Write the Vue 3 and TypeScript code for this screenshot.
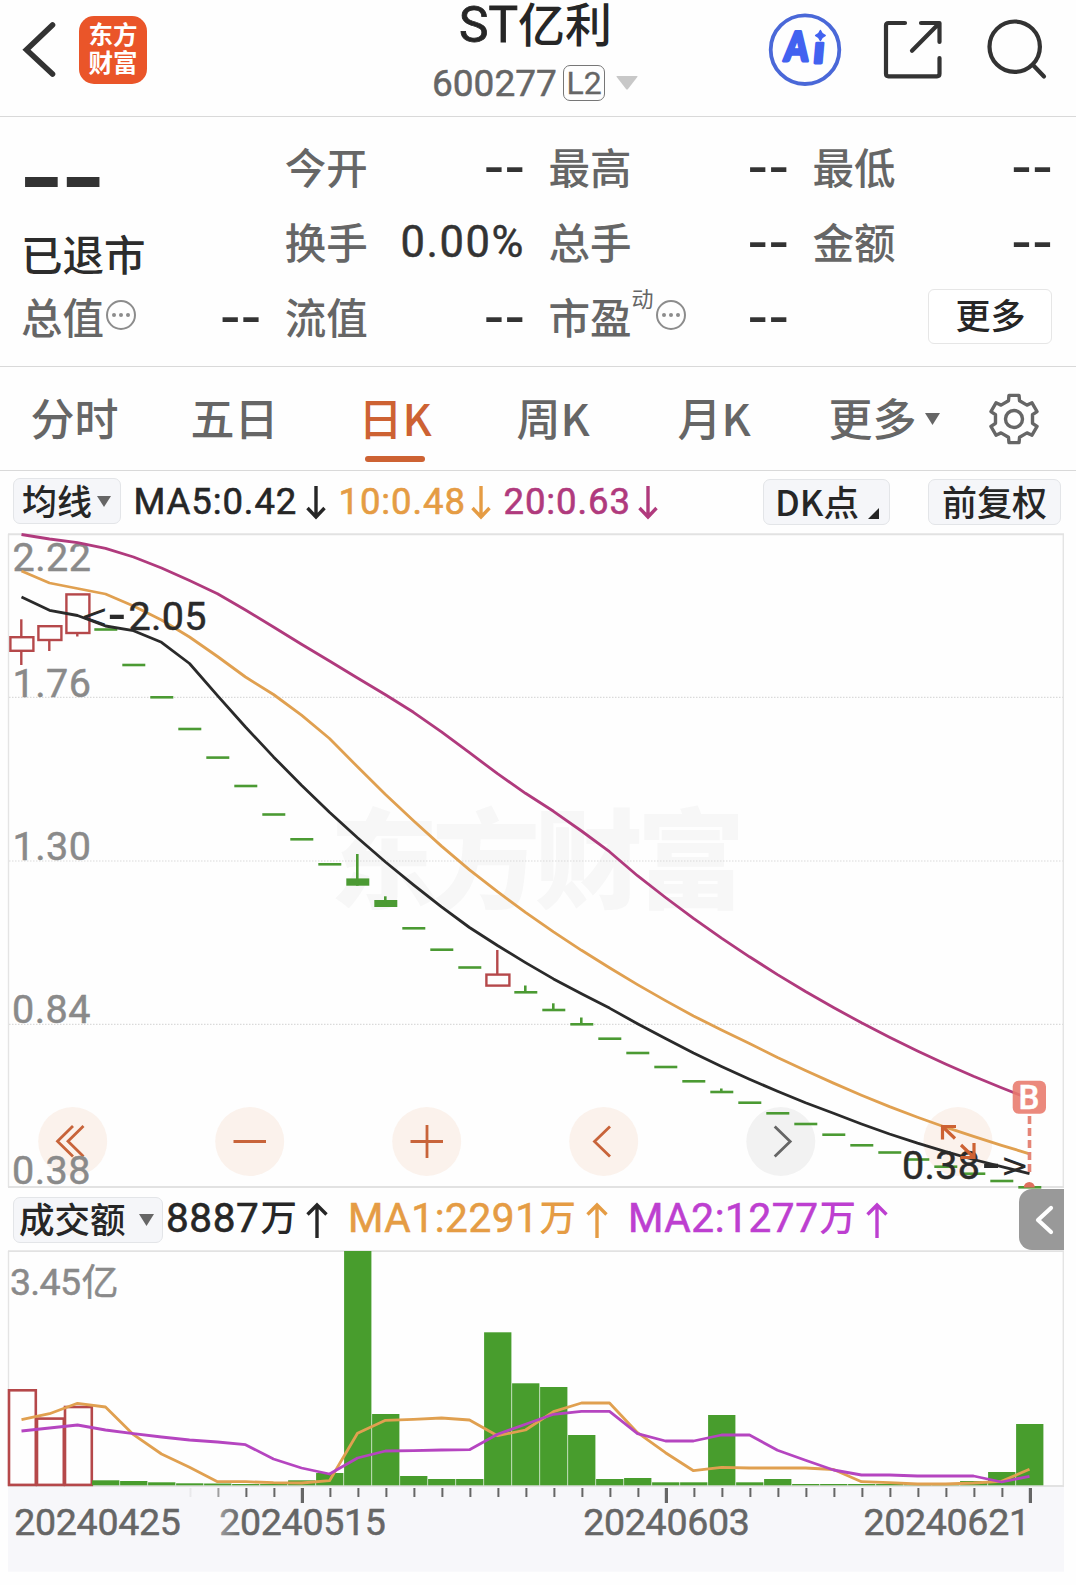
<script setup lang="ts">
interface Stat { label: string; value: string; info?: boolean; sup?: string }
interface Box { i: number; top: number; bottom: number; hi: number; lo: number }

const stats: Stat[][] = [
  [{ label: '今开', value: '--' }, { label: '最高', value: '--' }, { label: '最低', value: '--' }],
  [{ label: '换手', value: '0.00%' }, { label: '总手', value: '--' }, { label: '金额', value: '--' }],
]
const lastRow: Stat[] = [
  { label: '总值', value: '--', info: true },
  { label: '流值', value: '--' },
  { label: '市盈', value: '--', info: true, sup: '动' },
]
const tabs = ['分时', '五日', '日K', '周K', '月K']

const STEP = 28
const cx = (i: number): number => 21.5 + STEP * i

// vertical position of each day's close
const closes = [
  637.5, 626.5, 595, 629.5, 665, 697.3, 729, 757.6, 786, 814.5, 839.3, 864.3, 885, 907, 928.3, 949.7, 967.5, 975,
  992.3, 1010, 1024.3, 1038.7, 1053, 1067, 1081.3, 1092, 1102.7, 1113.3, 1124, 1134.7, 1145.3, 1152.5, 1159.5,
  1166.7, 1173.7, 1181, 1187.3,
]
const solid = [0, 1, 2, 12, 13, 17]
const dashes = closes.map((y, i) => ({ y, i })).filter((d) => !solid.includes(d.i))
const wicks = [
  { i: 18, y: 985.5 }, { i: 19, y: 1003.3 }, { i: 20, y: 1017.5 }, { i: 25, y: 1088.5 },
].map((w) => ({ ...w, y2: closes[w.i] }))
const rises: Box[] = [
  { i: 0, top: 637.2, bottom: 650.8, hi: 619.3, lo: 665 },
  { i: 1, top: 626.2, bottom: 640, hi: 626, lo: 651 },
  { i: 2, top: 594.4, bottom: 633, hi: 594, lo: 636.5 },
  { i: 17, top: 974.6, bottom: 985.6, hi: 950, lo: 985.6 },
]
const falls: Box[] = [
  { i: 12, top: 878.4, bottom: 885.7, hi: 854, lo: 885.7 },
  { i: 13, top: 900, bottom: 907, hi: 896.3, lo: 907 },
]

const average = (n: number, seed: number[]): number[] =>
  closes.map((_, i) => (i < seed.length ? seed[i] : closes.slice(i - n + 1, i + 1).reduce((a, b) => a + b, 0) / n))
const toPoints = (ys: number[]): string => ys.map((y, i) => `${cx(i)},${y.toFixed(1)}`).join(' ')

const ma5 = toPoints(average(5, [597, 610.3, 615.5, 626, 630.7, 642.3, 663.5]))
const ma10 = toPoints(average(10, [571, 583, 588.5, 594, 606, 620, 637, 656.5, 677, 694.5, 715.2, 738.5]))
const ma20 = toPoints(average(20, [
  534.5, 539, 542.7, 548.3, 557, 568, 580.5, 593.7, 610, 627, 644.3, 661, 678, 694.7, 712.3, 731.8, 752.7, 773.7,
  793.3, 811.3, 831, 851.7,
]))

const volumes = [
  1389, 1417.3, 1405.7, 1480.3, 1481, 1482.3, 1483.3, 1483.5, 1484, 1484, 1480.3, 1473, 1251, 1414, 1476, 1479, 1479,
  1332.3, 1383.3, 1387, 1435, 1479, 1478, 1482.3, 1482.3, 1415, 1482.3, 1479, 1484, 1484, 1484, 1484, 1484, 1484,
  1481, 1472, 1424,
]
const volMa1 = toPoints([
  1419.7, 1413.7, 1403.3, 1407, 1434.7, 1454, 1467.3, 1481.7, 1481.7, 1482.7, 1483, 1480.7, 1433.3, 1420.3, 1419.3,
  1418, 1420, 1435.7, 1430, 1411.7, 1403, 1403, 1432.7, 1452.7, 1470.7, 1467.3, 1468, 1468, 1468, 1469.5, 1481.7,
  1482.7, 1484, 1484, 1483, 1481.3, 1469.3,
])
const volMa2 = toPoints([
  1431, 1428, 1425, 1430, 1433.7, 1437, 1440, 1442, 1444.7, 1459, 1468, 1474, 1458, 1451, 1450.7, 1450, 1449.7,
  1434.3, 1424.3, 1414.3, 1411.3, 1411.3, 1433.7, 1441, 1441, 1435, 1435, 1450.3, 1460.3, 1470, 1475, 1475, 1476,
  1476, 1476, 1482, 1476.3,
])
const ticks = Array.from({ length: 31 }, (_, k) => k + 6)
const major = [10, 23, 36]
const grid = [697.3, 861, 1024.4]
const yLabels = [
  { t: '2.22', y: 571.3, x: 12.5 }, { t: '1.76', y: 696.9, x: 12.5 }, { t: '1.30', y: 860.4, x: 12.5 },
  { t: '0.84', y: 1023, x: 12 }, { t: '0.38', y: 1183.5, x: 12 },
]
const dates = [
  { t: '20240425', x: 14.3 }, { t: '20240515', x: 219.3 }, { t: '20240603', x: 583.3 }, { t: '20240621', x: 863.5 },
]
const gear = Array.from({ length: 6 }, (_, k) => {
  const at = (deg: number, r: number): string => {
    const a = ((deg + k * 60 - 90) * Math.PI) / 180
    return `${(26 + r * Math.cos(a)).toFixed(2)},${(26 + r * Math.sin(a)).toFixed(2)}`
  }
  return [at(-12, 24.2), at(12, 24.2), at(17, 19), at(43, 19)].join(' ')
}).join(' ')
</script>

<template>
  <div class="page">
    <header class="top">
      <svg class="back" width="60" height="70" viewBox="0 15 60 70">
        <polyline points="52.5,25 26.5,49.7 52.5,74" fill="none" stroke="#333" stroke-width="5.6" stroke-linecap="round" />
      </svg>
      <div class="logo"><span>东方</span><span>财富</span></div>
      <div class="name">
        <div class="title"><span class="latin">ST</span>亿利</div>
        <div class="code">
          <span class="num">600277</span><span class="level">L2</span>
          <svg width="22" height="14" viewBox="0 0 22 14"><path d="M1 0H21Q22 0 21.300 1L12 13Q11 14 10 13L.7 1Q0 0 1 0Z" fill="#c8c8c8" /></svg>
        </div>
      </div>
      <svg class="actions" width="300" height="90" viewBox="760 0 300 90" fill="none" stroke="#333" stroke-width="4.200">
        <circle cx="805" cy="49.700" r="34.300" stroke="#4a68d8" stroke-width="3.800" />
        <g fill="#4262f0" stroke="#4262f0" stroke-width="3" stroke-linejoin="round">
          <text class="ai" transform="translate(783.5 61.3) skewX(-5) scale(.88 1.05)">A</text>
          <text class="ai" transform="translate(812.5 63.3) skewX(-5) scale(1.1 1)">ı</text>
          <path d="M820.400 30.500Q821.600 34.300 825.200 35.500Q821.600 36.700 820.400 40.500Q819.200 36.700 815.600 35.500Q819.200 34.300 820.400 30.500Z" stroke-width="1.400" />
        </g>
        <g stroke-linecap="round" stroke-linejoin="round">
          <path d="M905 23H888.500Q886 23 886 25.500V73.800Q886 76.300 888.500 76.300H937Q939.500 76.300 939.500 73.800V58M921 23H939.500V42M938.500 24L912 50.700" />
          <circle cx="1014.700" cy="46.700" r="25.200" /><path d="M1033 65L1044 76.500" />
        </g>
      </svg>
    </header>

    <section class="quote">
      <div class="status"><div class="big">--</div><div class="delisted">已退市</div></div>
      <template v-for="(row, r) in stats" :key="r">
        <div v-for="s in row" :key="s.label" class="stat">
          <span class="label">{{ s.label }}</span>
          <span :class="s.value === '--' ? 'dash' : 'val'">{{ s.value }}</span>
        </div>
      </template>
      <div v-for="s in lastRow" :key="s.label" class="stat">
        <span class="label">{{ s.label }}</span>
        <span v-if="s.sup" class="sup">{{ s.sup }}</span>
        <svg v-if="s.info" class="info" width="32" height="32" viewBox="0 0 32 32" fill="#8c8c8c">
          <circle cx="16" cy="16" r="14" fill="none" stroke="#8c8c8c" stroke-width="2" />
          <circle cx="9" cy="16" r="2" /><circle cx="16" cy="16" r="2" /><circle cx="23" cy="16" r="2" />
        </svg>
        <span class="dash">{{ s.value }}</span>
      </div>
      <div class="more-cell"><button class="more">更多</button></div>
    </section>

    <nav class="tabs">
      <span v-for="t in tabs" :key="t" :class="{ active: t === '日K' }">{{ t }}</span>
      <span>更多</span>
      <svg class="caret" width="15" height="12" viewBox="0 0 15 12"><path d="M0 0H15L7.500 12Z" fill="#666" /></svg>
      <svg width="52" height="52" viewBox="0 0 52 52" fill="none" stroke="#666" stroke-width="3.400">
        <polygon :points="gear" stroke-linejoin="round" /><circle cx="26" cy="26" r="8.500" />
      </svg>
    </nav>

    <div class="ma">
      <button class="chip avg"><b>均线</b><svg width="14" height="11" viewBox="0 0 14 11"><path d="M0 0H14L7 11Z" fill="#666" /></svg></button>
      <span class="num dark">MA5:0.42</span>
      <svg class="dark" width="20" height="34" viewBox="0 0 20 34"><path d="M10 0V31M1.500 22L10 31L18.500 22" /></svg>
      <span class="num gold">10:0.48</span>
      <svg class="gold" width="20" height="34" viewBox="0 0 20 34"><path d="M10 0V31M1.500 22L10 31L18.500 22" /></svg>
      <span class="num plum">20:0.63</span>
      <svg class="plum" width="20" height="34" viewBox="0 0 20 34"><path d="M10 0V31M1.500 22L10 31L18.500 22" /></svg>
      <button class="chip dk"><b>DK点</b><svg width="11" height="11" viewBox="0 0 11 11"><path d="M11 0V11H0Z" fill="#262626" /></svg></button>
      <button class="chip adj"><b>前复权</b></button>
    </div>

    <svg class="chart" width="1076" height="659" viewBox="0 530 1076 659">
      <text class="mark" x="330" y="900" textLength="415">东方财富</text>
      <g stroke="#dadada" stroke-width="1.200" stroke-dasharray="1.500 1.500">
        <line v-for="y in grid" :key="y" x1="9" x2="1063" :y1="y" :y2="y" />
      </g>
      <path d="M8.500 534V1187M1063.300 534V1187" stroke="#e4e4e4" stroke-width="1.400" />
      <path d="M8 534.200H1064M8 1186.900H1064" stroke="#e2e2e2" stroke-width="2" />
      <g fill="#fbf2ec">
        <circle v-for="x in [72.7, 249.7, 426.7, 603.7, 958]" :key="x" :cx="x" cy="1141.500" r="34.500" />
        <circle cx="780.800" cy="1141.500" r="34.500" fill="#f2f2f2" />
      </g>
      <g fill="none" stroke="#c8643a" stroke-width="2.800">
        <path d="M73 1126L57.500 1141.300L73 1156.500M83.500 1126L68 1141.300L83.500 1156.500" />
        <path d="M233.500 1141.500H266M410.500 1141.500H443M427 1125V1158" />
        <path d="M610 1126.500L594.500 1141.500L610 1156.500" />
        <path d="M774.700 1126.500L790.200 1141.500L774.700 1156.500" stroke="#666" />
      </g>
      <text v-for="l in yLabels" :key="l.t" class="axis" :x="l.x" :y="l.y" textLength="78.500">{{ l.t }}</text>

      <g stroke="#4b9a33" stroke-width="2.600">
        <line v-for="d in dashes" :key="d.i" :x1="cx(d.i) - 11.2" :x2="cx(d.i) + 11.8" :y1="d.y" :y2="d.y" />
        <line v-for="w in wicks" :key="w.i" :x1="cx(w.i) - 0.2" :x2="cx(w.i) - 0.2" :y1="w.y" :y2="w.y2" />
        <g v-for="f in falls" :key="f.i">
          <rect :x="cx(f.i) - 11.2" :y="f.top" width="23" :height="f.bottom - f.top" fill="#4b9a33" stroke="none" />
          <line :x1="cx(f.i) - 0.2" :x2="cx(f.i) - 0.2" :y1="f.hi" :y2="f.lo" />
        </g>
      </g>
      <g stroke="#b5484a" stroke-width="2.400" fill="none">
        <g v-for="b in rises" :key="b.i">
          <rect :x="cx(b.i) - 11.1" :y="b.top" width="23" :height="b.bottom - b.top" />
          <line :x1="cx(b.i) - 0.2" :x2="cx(b.i) - 0.2" :y1="b.hi" :y2="b.top" />
          <line :x1="cx(b.i) - 0.2" :x2="cx(b.i) - 0.2" :y1="b.bottom" :y2="b.lo" />
        </g>
      </g>
      <g fill="none" stroke-width="2.800" stroke-linejoin="round">
        <polyline :points="ma20" stroke="#b03a7d" />
        <polyline :points="ma10" stroke="#e0a050" />
        <polyline :points="ma5" stroke="#2a2a2a" />
      </g>
      <g class="price">
        <text x="80" y="628" class="arrow">&lt;</text>
        <text x="107.300" y="632" class="hyphen">-</text>
        <text x="128.500" y="629.500" textLength="78">2.05</text>
        <text x="902" y="1178.800" textLength="78">0.38</text>
        <text x="981.500" y="1181" class="hyphen">-</text>
        <text x="1000.400" y="1177.300" class="arrow">&gt;</text>
      </g>
      <path d="M956 1126.500H942.500V1139.500M943 1127L955 1138.500M974 1143V1157.500H960.500M973.500 1157L961 1145" fill="none" stroke="#cd6233" stroke-width="3.200" />
      <line x1="1029.500" y1="1116" x2="1029.500" y2="1174" stroke="#e58577" stroke-width="3.600" stroke-dasharray="8 4" />
      <rect x="1012.700" y="1080.700" width="33.300" height="33" rx="6" fill="#e8796b" fill-opacity=".88" />
      <text x="1018.600" y="1109.300" class="flag">B</text>
      <path d="M1023.800 1187.500a5.500 5.500 0 0 1 11 0Z" fill="#df6f5d" />
    </svg>

    <div class="volbar">
      <button class="chip turnover"><b>成交额</b><svg width="15" height="12" viewBox="0 0 15 12"><path d="M0 0H15L7.500 12Z" fill="#666" /></svg></button>
      <span class="num dark">8887<i>万</i></span>
      <svg class="dark" width="22" height="36" viewBox="0 0 22 36"><path d="M11 36V3M1.500 12.500L11 3L20.500 12.500" /></svg>
      <span class="num gold">MA1:2291<i>万</i></span>
      <svg class="gold" width="22" height="36" viewBox="0 0 22 36"><path d="M11 36V3M1.500 12.500L11 3L20.500 12.500" /></svg>
      <span class="num violet">MA2:1277<i>万</i></span>
      <svg class="violet" width="22" height="36" viewBox="0 0 22 36"><path d="M11 36V3M1.500 12.500L11 3L20.500 12.500" /></svg>
      <button class="drawer">
        <svg width="20" height="32" viewBox="0 0 20 32"><path d="M17 4L4 16L17 28" fill="none" stroke="#fff" stroke-width="4.200" stroke-linecap="round" stroke-linejoin="round" /></svg>
      </button>
    </div>

    <svg class="chart" width="1076" height="335" viewBox="0 1250 1076 335">
      <defs>
        <linearGradient id="fade" x1="185" x2="240" y1="0" y2="0" gradientUnits="userSpaceOnUse">
          <stop offset="0" stop-color="#f7f7fa" /><stop offset="1" stop-color="#f7f7fa" stop-opacity="0" />
        </linearGradient>
      </defs>
      <rect x="8" y="1486" width="1056" height="85.700" fill="#f7f7fa" />
      <path d="M8.500 1251V1486M1063.300 1251V1486" stroke="#e4e4e4" stroke-width="1.400" />
      <path d="M8 1251.200H1064M8 1486H1064" stroke="#e2e2e2" stroke-width="1.800" />
      <text class="axis small" x="10" y="1294.800" textLength="71">3.45</text>
      <text class="axis cjk" x="81.500" y="1295.800">亿</text>
      <template v-for="(v, i) in volumes" :key="i">
        <rect v-if="i < 3" :x="9 + STEP * i" :y="v + 1.3" width="26.800" :height="1484.6 - v - 1" fill="none" stroke="#b5484a" stroke-width="2.600" />
        <rect v-else :x="8.1 + STEP * i" :y="v" width="27.300" :height="1485.3 - v" fill="#489d2d" />
      </template>
      <g fill="none" stroke-width="2.800" stroke-linejoin="round">
        <polyline :points="volMa1" stroke="#e0a050" />
        <polyline :points="volMa2" stroke="#b545c0" />
      </g>
      <g fill="#666">
        <rect v-for="k in ticks" :key="k" :x="22.400 + STEP * k - (major.includes(k) ? 1.6 : 1)" y="1488" :width="major.includes(k) ? 3.2 : 2" :height="major.includes(k) ? 15 : 9" />
        <text v-for="d in dates" :key="d.t" class="date" :x="d.x" y="1535.300" textLength="166.500">{{ d.t }}</text>
      </g>
      <rect x="185" y="1487.500" width="55" height="60" fill="url(#fade)" />
    </svg>
  </div>
</template>

<style>
body { margin: 0; background: #fefefe; }
</style>

<style scoped>
.page { width: 1076px; height: 1585px; overflow: hidden; background: #fefefe; font-family: "Noto Sans CJK SC", sans-serif; color: #333; }
svg { display: block; flex: none; }
button { box-sizing: border-box; padding: 0; margin: 0; font-family: inherit; color: #262626; }
.num { font-family: Roboto, sans-serif; white-space: nowrap; }

.top { display: grid; grid-template-columns: 79px 68px 285px 207px 121px 300px; height: 116px; border-bottom: 1px solid #d9d9d9; }
.back { margin-top: 15px; }
.logo { display: flex; flex-direction: column; align-items: center; justify-content: center; margin-top: 15.500px; width: 68px; height: 68px; border-radius: 15px; background: #ea5529; color: #fff; font-size: 24.500px; font-weight: 700; }
.logo span { line-height: 29px; height: 29px; margin-top: -1px; }
.logo span:first-child { margin-top: -4px; }
.name { grid-column: 4; }
.title { width: 207px; height: 58px; line-height: 43px; font-size: 47px; font-weight: 500; text-align: center; color: #262626; white-space: nowrap; }
.title .latin { font-family: Roboto, sans-serif; font-size: 49.500px; font-weight: 400; -webkit-text-stroke: .8px #262626; }
.code { display: flex; align-items: center; height: 50px; color: #666; font-size: 37px; }
.code .num { width: 131px; line-height: 51px; -webkit-text-stroke: .5px currentColor; }
.level { box-sizing: border-box; width: 42px; height: 36px; margin-right: 10.500px; border: 1.500px solid #777; border-radius: 7px; font: 32px/35px Roboto, sans-serif; text-align: center; -webkit-text-stroke: .3px currentColor; }
.actions { grid-column: 6; }
.ai { font-family: Lato, sans-serif; font-weight: 900; font-size: 38.500px; }

.quote { display: grid; box-sizing: border-box; grid-template-columns: repeat(4, 237px); column-gap: 26.800px; grid-template-rows: 75px 75px 75px; height: 250px; padding: 12.500px 0 0 21px; border-bottom: 1px solid #d9d9d9; }
.status { grid-row: 1 / 3; display: flex; flex-direction: column; }
.big { height: 85px; line-height: 85px; font-family: "DejaVu Sans", sans-serif; font-size: 124px; letter-spacing: -3px; margin-left: -2px; position: relative; top: 1.500px; }
.delisted { height: 65px; line-height: 65px; font-size: 41.500px; font-weight: 500; margin-top: 6.500px; color: #2c2c2c; }
.stat { display: flex; align-items: center; height: 75px; }
.label { font-size: 41.500px; line-height: 60px; color: #666; font-weight: 500; margin-top: -2.500px; }
.val { margin-left: auto; font-family: Roboto, sans-serif; font-size: 43.500px; letter-spacing: 1.500px; margin-right: -3px; -webkit-text-stroke: .5px currentColor; }
.dash { margin-left: auto; font-family: "DejaVu Sans", sans-serif; font-size: 58px; line-height: 75px; margin-right: -3.500px; position: relative; top: -1px; }
.sup { font-size: 22px; line-height: 26px; margin-bottom: 40px; color: #666; }
.info { margin: -5px 0 0 1px; }
.more-cell { display: flex; align-items: center; justify-content: flex-end; }
.more { width: 124px; height: 55px; margin-right: -3px; margin-top: -1.500px; padding-bottom: 5px; border: 1.500px solid #e6e6e6; border-radius: 6px; background: #fff; font-size: 35px; line-height: 45px; font-weight: 500; }

.tabs { display: grid; grid-template-columns: 160px 168px 158px 161px 151px 96.500px 62.500px 52px; align-items: center; height: 103px; padding-left: 30.500px; border-bottom: 1px solid #d9d9d9; color: #666; font-size: 44px; font-weight: 500; line-height: 103px; white-space: nowrap; }
.tabs span { height: 103px; margin-top: -2px; }
.tabs .active { position: relative; color: #cd6233; }
.active::after { content: ""; position: absolute; left: 6px; top: 90px; width: 60px; height: 6px; border-radius: 3px; background: #cd6233; }

.ma { display: grid; grid-template-columns: 121px 172px 33px 132.500px 32.500px 134px 125.500px 165px 133px; align-items: center; height: 59px; padding-left: 12.500px; font-size: 36.500px; }
.ma > .num { letter-spacing: .9px; margin-top: 2px; }
.ma > svg { margin-top: 5px; }
.ma .num, .volbar .num { font-weight: 400; -webkit-text-stroke: .6px currentColor; }
.dark { color: #262626; } .gold { color: #e59c44; } .plum { color: #b03a7d; } .violet { color: #bd3fd0; }
.ma > svg path, .volbar > svg path { fill: none; stroke: currentColor; stroke-width: 3.400px; }
.chip { display: flex; align-items: center; height: 46px; border: 1.500px solid #e3e5e8; border-radius: 7px; background: #f5f6f9; font-size: 35px; line-height: 42px; white-space: nowrap; }
.chip b { font-weight: 500; margin-top: -3px; }
.avg { width: 108px; padding-left: 8.500px; gap: 5px; margin-top: 1px; }
.dk { width: 127px; padding-left: 11px; gap: 9px; margin-top: 3px; font-size: 35.500px; }
.dk svg { margin-top: 22px; }
.adj { width: 133px; justify-content: center; margin-top: 3px; }

.chart { font-family: Roboto, sans-serif; }
.mark { font-family: "Noto Sans CJK SC", sans-serif; font-size: 108px; font-weight: 900; fill: #f7f7f7; }
.axis { font-size: 39.500px; fill: #8a8a8a; stroke: #8a8a8a; stroke-width: .5px; }
.axis.small { font-size: 37.500px; }
.axis.cjk { font-family: "Noto Sans CJK SC", sans-serif; font-size: 37px; }
.date { font-size: 37.500px; stroke: #666; stroke-width: .5px; }
.price { font-size: 39.500px; fill: #2a2a2a; stroke: #2a2a2a; stroke-width: .5px; }
.arrow { font-family: "DejaVu Sans", sans-serif; font-size: 34px; stroke: none; }
.hyphen { font-family: "DejaVu Sans", sans-serif; font-size: 53px; stroke: none; }
.flag { font-size: 33px; font-weight: 500; fill: #fff; stroke: #fff; stroke-width: .5px; }

.volbar { display: grid; grid-template-columns: 153px 140px 42px 238px 42px 237.500px 153px 45px; align-items: center; height: 61px; padding-left: 13px; font-size: 40.500px; }
.volbar i { font: 500 36.500px "Noto Sans CJK SC", sans-serif; line-height: 40px; -webkit-text-stroke: 0; margin-left: 1px; position: relative; top: -1px; }
.volbar .num { line-height: 59px; height: 61px; letter-spacing: .6px; }
.turnover { width: 150px; padding-left: 5px; gap: 13px; font-size: 35.500px; }
.drawer { display: flex; align-items: center; width: 45px; height: 61px; padding-left: 15px; border: 0; border-radius: 13px 0 0 13px; background: #999; }
</style>
